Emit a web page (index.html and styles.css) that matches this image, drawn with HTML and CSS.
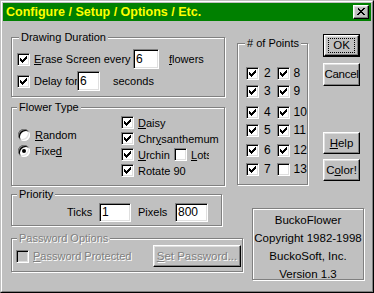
FILE: index.html
```html
<!DOCTYPE html>
<html>
<head>
<meta charset="utf-8">
<link rel="stylesheet" href="styles.css">
</head>
<body>
<div class="window">
  <div class="frame">
    <div class="titlebar">
      <span class="title">Configure / Setup / Options / Etc.</span>
      <span class="close"><span class="xglyph"></span></span>
    </div>
    <div class="client">
      <div class="row-a">
        <div class="col-left">
          <div class="group g-draw">
            <div class="legend lg-draw">Drawing Duration</div>
            <div class="line l-erase">
              <span class="cb on"></span>
              <span class="lbl w-erase"><u>E</u>rase Screen every</span>
              <span class="tb tb-erase">6</span>
              <span class="lbl m-flowers"><u>f</u>lowers</span>
            </div>
            <div class="line l-delay">
              <span class="cb on"></span>
              <span class="lbl w-delay">Delay for</span>
              <span class="tb tb-delay">6</span>
              <span class="lbl m-seconds">seconds</span>
            </div>
          </div>
          <div class="group g-flower">
            <div class="legend lg-flower">Flower Type</div>
            <div class="flower-body">
              <div class="radios">
                <div class="rrow"><span class="radio"></span><span class="lbl"><u>R</u>andom</span></div>
                <div class="rrow"><span class="radio sel"></span><span class="lbl">Fixe<u>d</u></span></div>
              </div>
              <div class="checks">
                <div class="crow"><span class="cb on"></span><span class="lbl"><u>D</u>aisy</span></div>
                <div class="crow"><span class="cb on"></span><span class="lbl">Chr<u>y</u>santhemum</span></div>
                <div class="crow"><span class="cb on"></span><span class="lbl w-urchin"><u>U</u>rchin</span><span class="cb"></span><span class="lbl w-lots"><u>L</u>ots</span></div>
                <div class="crow last"><span class="cb on"></span><span class="lbl">Rotate 90</span></div>
              </div>
            </div>
          </div>
        </div>
        <div class="group g-points">
          <div class="legend lg-points"># of Points</div>
          <div class="pgrid">
            <div class="prow p1"><span class="cb on"></span><span class="pn">2</span><span class="cb on"></span><span class="pn">8</span></div>
            <div class="prow p2"><span class="cb on"></span><span class="pn">3</span><span class="cb on"></span><span class="pn">9</span></div>
            <div class="prow p3"><span class="cb on"></span><span class="pn">4</span><span class="cb on"></span><span class="pn">10</span></div>
            <div class="prow p4"><span class="cb on"></span><span class="pn">5</span><span class="cb on"></span><span class="pn">11</span></div>
            <div class="prow p5"><span class="cb on"></span><span class="pn">6</span><span class="cb on"></span><span class="pn">12</span></div>
            <div class="prow p6"><span class="cb on"></span><span class="pn">7</span><span class="cb"></span><span class="pn">13</span></div>
          </div>
        </div>
        <div class="buttons">
          <div class="default-ring"><div class="btn btn-ok"><span class="focus">OK</span></div></div>
          <div class="btn btn-cancel">Cancel</div>
          <div class="btn btn-help"><u>H</u>elp</div>
          <div class="btn btn-color">C<u>o</u>lor!</div>
        </div>
      </div>
      <div class="row-b">
        <div class="col-left2">
          <div class="group g-prio">
            <div class="legend lg-prio">Priority</div>
            <div class="line l-prio">
              <span class="lbl w-ticks">Ticks</span>
              <span class="tb tb-ticks">1</span>
              <span class="lbl w-pixels">Pixels</span>
              <span class="tb tb-pixels">800</span>
            </div>
          </div>
          <div class="group g-pass">
            <div class="legend lg-pass dis">Password Options</div>
            <div class="line l-pass">
              <span class="cb disabled"></span>
              <span class="lbl dis w-pass"><u>P</u>assword Protected</span>
              <span class="btn btn-set dis"><u>S</u>et Password...</span>
            </div>
          </div>
        </div>
        <div class="info">
          <div>BuckoFlower</div>
          <div>Copyright 1982-1998</div>
          <div>BuckoSoft, Inc.</div>
          <div>Version 1.3</div>
        </div>
      </div>
    </div>
  </div>
</div>
</body>
</html>
```

FILE: styles.css
```css
html, body {
  margin: 0;
  padding: 0;
  background: #c0c0c0;
}
body {
  font-family: "Liberation Sans", Arial, sans-serif;
  font-size: 11px;
  color: #000;
}
u { text-decoration: underline; text-underline-offset: 1px; }

.window {
  width: 374px;
  height: 293px;
  box-sizing: border-box;
  border: 1px solid;
  border-color: #c0c0c0 #000 #000 #c0c0c0;
  background: #c0c0c0;
}
.frame {
  height: 100%;
  box-sizing: border-box;
  border: 1px solid;
  border-color: #fff #808080 #808080 #fff;
  padding: 1px;
}

/* title bar */
.titlebar {
  height: 18px;
  background: #008000;
  display: flex;
  align-items: flex-start;
  justify-content: space-between;
}
.title {
  color: #ffff00;
  font-weight: bold;
  font-size: 12.5px;
  line-height: 18px;
  padding-left: 3px;
}
.close {
  margin: 2px 2px 0 0;
  width: 16px;
  height: 14px;
  box-sizing: border-box;
  background: #c0c0c0;
  border: 1px solid;
  border-color: #fff #000 #000 #fff;
  box-shadow: inset -1px -1px #808080, inset 1px 1px #dfdfdf;
  position: relative;
}
.xglyph {
  position: absolute;
  left: 3px;
  top: 2px;
  width: 1px;
  height: 1px;
  color: #000;
  box-shadow: 0 0, 1px 0, 6px 0, 7px 0,
              1px 1px, 2px 1px, 5px 1px, 6px 1px,
              2px 2px, 3px 2px, 4px 2px, 5px 2px,
              3px 3px, 4px 3px,
              2px 4px, 3px 4px, 4px 4px, 5px 4px,
              1px 5px, 2px 5px, 5px 5px, 6px 5px,
              0 6px, 1px 6px, 6px 6px, 7px 6px;
}

/* client */
.client {
  display: flex;
  flex-direction: column;
}
.row-a {
  display: flex;
  align-items: flex-start;
}
.row-b {
  display: flex;
  align-items: flex-start;
  margin-top: 8px;
}
.col-left {
  width: 215px;
  margin-left: 8px;
  padding-top: 16px;
  display: flex;
  flex-direction: column;
}
.col-left2 {
  width: 232px;
  margin-left: 8px;
  display: flex;
  flex-direction: column;
}

/* group boxes */
.group {
  box-sizing: border-box;
  border: 1px solid #808080;
  box-shadow: inset 1px 1px #fff, 1px 1px #fff;
}
.legend {
  width: max-content;
  margin-top: -7px;
  padding: 0 2px;
  line-height: 13px;
  height: 13px;
  background: #c0c0c0;
}
.lg-draw { margin-left: 7px; }
.lg-flower { margin-left: 5px; }
.lg-prio { margin-left: 5px; }
.lg-pass { margin-left: 5px; }
.lg-points { margin-left: 7px; }

.g-draw { width: 214px; height: 60px; }
.g-flower { width: 214px; height: 79px; margin-top: 10px; }
.g-prio { width: 211px; height: 32px; }
.g-pass { width: 232px; height: 34px; margin-top: 12px; }
.g-points { width: 71px; height: 142px; margin: 22px 0 0 11px; }

.line {
  display: flex;
  align-items: center;
}
.lbl {
  line-height: 13px;
  white-space: nowrap;
}

/* checkbox */
.cb {
  flex: none;
  width: 13px;
  height: 13px;
  box-sizing: border-box;
  border: 1px solid;
  border-color: #808080 #fff #fff #808080;
  box-shadow: inset 1px 1px #000, inset -1px -1px #dfdfdf;
  background: #fff;
  position: relative;
}
.cb.on::after {
  content: "";
  position: absolute;
  left: 2px;
  top: 2px;
  width: 1px;
  height: 1px;
  color: #000;
  box-shadow: 6px 0, 5px 1px, 6px 1px,
              0 2px, 4px 2px, 5px 2px, 6px 2px,
              0 3px, 1px 3px, 3px 3px, 4px 3px, 5px 3px,
              0 4px, 1px 4px, 2px 4px, 3px 4px, 4px 4px,
              1px 5px, 2px 5px, 3px 5px,
              2px 6px;
}
.cb.disabled { background: #c0c0c0; }
.cb + .lbl { margin-left: 4px; }

/* radio */
.radio {
  flex: none;
  width: 12px;
  height: 12px;
  border-radius: 50%;
  background: #fff;
  box-shadow: inset 1px 1px 0 #808080, inset -1px -1px 0 #fff,
              inset 2px 2px 0 #000, inset -2px -2px 0 #dfdfdf;
  position: relative;
}
.radio.sel::after {
  content: "";
  position: absolute;
  left: 4px;
  top: 4px;
  width: 4px;
  height: 4px;
  border-radius: 50%;
  background: #000;
}

/* textbox */
.tb {
  flex: none;
  box-sizing: border-box;
  height: 20px;
  border: 1px solid;
  border-color: #808080 #fff #fff #808080;
  box-shadow: inset 1px 1px #000, inset -1px -1px #dfdfdf;
  background: #fff;
  padding-left: 2px;
  line-height: 18px;
  font-size: 12px;
}

/* Drawing duration */
.l-erase { margin: 5px 0 0 5px; height: 20px; }
.l-delay { margin: 2px 0 0 5px; height: 20px; }
.w-erase { width: 99px; }
.tb-erase { width: 26px; }
.m-flowers { margin-left: 10px; }
.w-delay { width: 43px; }
.tb-delay { width: 23px; }
.m-seconds { margin-left: 13px; }

/* Flower type */
.flower-body {
  display: flex;
  align-items: flex-start;
}
.radios {
  margin: 15px 0 0 6px;
  width: 103px;
}
.rrow {
  display: flex;
  align-items: flex-start;
  height: 16px;
}
.rrow .lbl { line-height: 12px; margin-left: 5px; }
.checks { margin-top: 2px; }
.crow {
  display: flex;
  align-items: flex-start;
  height: 16px;
}
.crow .lbl { line-height: 14px; }
.w-urchin { width: 36px; }
.w-lots { width: 18px; overflow: hidden; margin-left: 5px; }

/* Points */
.pgrid { margin-left: 8px; }
.prow {
  display: flex;
  align-items: center;
  height: 13px;
}
.p1 { margin-top: 17px; }
.p2 { margin-top: 5px; }
.p3 { margin-top: 8px; }
.p4 { margin-top: 5px; }
.p5 { margin-top: 7px; }
.p6 { margin-top: 6px; }
.pn {
  width: 18px;
  box-sizing: border-box;
  padding-left: 5px;
  line-height: 13px;
  font-size: 12px;
}
.pn:last-child { padding-left: 4px; }

/* Buttons */
.buttons {
  display: flex;
  flex-direction: column;
  margin: 13px 0 0 15px;
}
.btn {
  box-sizing: border-box;
  display: flex;
  align-items: center;
  justify-content: center;
  background: #c0c0c0;
  border: 1px solid;
  border-color: #fff #000 #000 #fff;
  box-shadow: inset -1px -1px #808080, inset 1px 1px #dfdfdf;
  white-space: nowrap;
  line-height: 13px;
  font-size: 11.5px;
}
.default-ring {
  width: 37px;
  height: 23px;
  box-sizing: border-box;
  border: 1px solid #000;
}
.btn-ok { width: 35px; height: 21px; }
.focus {
  width: 25px;
  height: 13px;
  outline: 1px dotted #000;
  display: flex;
  justify-content: center;
}
.btn-cancel { width: 37px; height: 23px; margin-top: 6px; letter-spacing: -0.3px; }
.btn-help { width: 37px; height: 22px; margin-top: 46px; }
.btn-color { width: 37px; height: 22px; margin-top: 5px; }

/* Priority */
.l-prio { margin-top: 2px; height: 19px; }
.w-ticks { margin-left: 55px; width: 32px; }
.tb-ticks { width: 32px; height: 19px; line-height: 17px; }
.w-pixels { margin-left: 7px; width: 37px; }
.tb-pixels { width: 33px; height: 19px; line-height: 17px; }

/* Password */
.l-pass { height: 22px; padding-left: 4px; }
.w-pass { width: 120px; }
.dis {
  color: #808080;
  text-shadow: 1px 1px 0 #fff;
}
.btn-set {
  width: 88px;
  height: 22px;
}

/* Info */
.info {
  box-sizing: border-box;
  width: 112px;
  height: 72px;
  margin: 14px 0 0 9px;
  border: 1px solid #808080;
  box-shadow: inset 1px 1px #fff, 1px 1px #fff;
  padding-top: 2px;
  text-align: center;
  line-height: 18px;
  font-size: 11.5px;
}
```
